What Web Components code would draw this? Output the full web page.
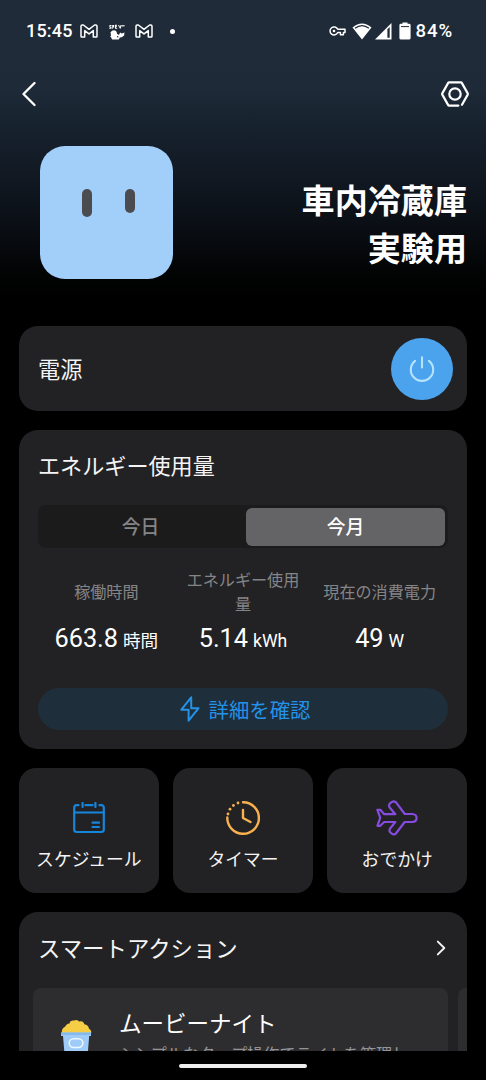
<!DOCTYPE html>
<html lang="ja">
<head>
<meta charset="utf-8">
<title>車内冷蔵庫 実験用</title>
<style>
html,body{margin:0;background:#000}
body{font-family:Roboto,"Noto Sans CJK JP",sans-serif;color:#f4f4f5}
</style>
</head>
<body>
<device-page></device-page>
<script>
const define = (name, css, html) => customElements.define(name, class extends HTMLElement {
  constructor() {
    super();
    const t = document.createElement('template');
    t.innerHTML = `<style>${css}</style>${typeof html === 'function' ? html(this) : html}`;
    this.attachShadow({mode: 'open'}).append(t.content.cloneNode(true));
  }
});

const stroke = (w, d, extra = '') => `<path d="${d}" fill="none" stroke="currentColor" stroke-width="${w}" stroke-linecap="round" stroke-linejoin="round" ${extra}/>`;
const ICONS = {
  mail: [18, 14, stroke(1.5, 'M1 12.2V2.2Q1 1 2.2 1H3.4L9 5.3 14.6 1H15.8Q17 1 17 2.2V12.2Q17 13 16.2 13H13.3V6.6L9 9.9 4.7 6.6V13H1.8Q1 13 1 12.2Z')],
  bird: [16, 16, `<g fill="currentColor"><path d="M.5 1h2v1H1.5v.7h1v2H.3v-1h1v-.5h-1zM3.2 1h2v2.5H4v1.3h-.8zM6 .8h2v.9H7v.6h1v.8H7v.7h1.2v.9H6zM9 1h1l1 2 .6-2h1l-.8 3.6h-1zM12.7 1.2h3v1l-3 .4zM1.5 8.2Q4.2 5.2 7 7.1 8 8 8 9.8L10 11l1.1-2.6 1.7 1.1 2.7-1-.4 3-2.3 1.8-2 .1-1 2-6.8.1-.8-2-1-1 .8-1.1z"/></g><circle cx="8.7" cy="12.7" r=".8" fill="#1e2a37"/>`],
  key: [17, 10, `<path d="M8.7 3.3H16V6.4H14.4V8.7H11.4V6.5H8.7A4 4 0 1 1 8.7 3.3Z" fill="none" stroke="currentColor" stroke-width="1.5" stroke-linejoin="round"/><circle cx="5" cy="5" r="1.3" fill="currentColor"/>`],
  wifi: [20, 17, `<path d="M.5 4.4Q10-3.5 19.5 4.4L10 16.5Z" fill="currentColor"/><path d="M3 5.3Q10-.1 17 5.3" fill="none" stroke="#1e2a37" stroke-width="1.2"/>`],
  signal: [17, 17, `<path d="M0 16.5L16.5 0V16.5Z" fill="currentColor"/><path d="M12.4 6.2L14.7 4V14.8H12.4Z" fill="#1e2a37"/>`],
  battery: [12, 18, `<path d="M3.5 1.8V.4h5v1.4h1.7Q11.6 1.8 11.6 3.2V16Q11.6 17.6 10 17.6H2Q.4 17.6.4 16V3.2Q.4 1.8 1.8 1.8Z" fill="currentColor"/><path d="M2 4.6h8" stroke="#1e2a37"/>`],
  back: [14, 26, stroke(2.3, 'M12.5 2L1.5 13 12.5 24')],
  settings: [28, 26, stroke(2.2, 'M17.4 24.6H8Q7.5 24.6 7.2 24.1L1.3 13.6Q1 13 1.3 12.4L7.2 1.9Q7.5 1.4 8 1.4H20Q20.5 1.4 20.8 1.9L26.7 12.4Q27 13 26.7 13.6L21 23.7') + `<circle cx="14" cy="13" r="5.7" fill="none" stroke="currentColor" stroke-width="2.2"/>`],
  power: [26, 26, stroke(2.1, 'M13 1.2V11.4M6.1 4.9A11.2 11.2 0 1 0 19.9 4.9')],
  bolt: [20, 26, stroke(2, 'M11.2 1.3L1.4 13.7H8.6V24.7L18.6 12.2H11.2Z')],
  calendar: [32, 32, stroke(2.2, 'M5.5 3.2H3.7Q1.2 3.2 1.2 5.7V27.5Q1.2 30 3.7 30H28.3Q30.8 30 30.8 27.5V5.7Q30.8 3.2 28.3 3.2H26.5M12.5 3.2H19.5M9.6 1V4.9M22.4 1V4.9M1.2 10.5H30.8M19.5 20.7H26M19.5 25H26')],
  timer: [34, 34, stroke(2.4, 'M17 1.2A15.8 15.8 0 1 1 1.3 16.5M17 9V17L24.5 21') + `<g fill="currentColor"><circle cx="2" cy="13" r="1.4"/><circle cx="4" cy="8.2" r="1.4"/><circle cx="7.4" cy="4.5" r="1.4"/><circle cx="12" cy="2" r="1.4"/></g>`],
  plane: [42, 36, stroke(2.2, 'M1.4 9.8H4.3L8.2 14.2H19.3L13.5 7.2Q12.2 5.2 14.2 3.2L16 1.9Q18.5.7 20.2 2.6L28.8 14H36Q40.6 14.2 40.6 18 40.6 21.8 36 22H28.7L20.3 33Q18.5 35.6 15.8 33.6L14 32Q12.8 30.5 14.3 28.2L19.3 22H8.2L4.3 25.8H1.4L4.2 17.9Z')],
  next: [10, 16, stroke(1.9, 'M1.8 1.6L8.3 8 1.8 14.4')],
  popcorn: [32, 46, `<path d="M2 15.5Q1 10.5 5.3 8.6 6.2 5.7 9.5 5.4 10.3 2.1 14 2.6 17.2.8 19.2 3.5 23.3 2.4 24.3 6.3 28.5 7.1 29 10.8 32 12.4 31 16Z" fill="#f5ce45"/><path d="M1 14.5H31V18H29.2L27 45H5.3L3 18H1Z" fill="#9ecbf7"/><path d="M1 14.5H31V17H1Z" fill="#85b8eb"/><rect x="9.2" y="20.7" width="13.7" height="8.8" rx="4.4" fill="#9ecbf7" stroke="#edf7ff" stroke-width="1.5"/>`]
};
define('line-icon', ':host{display:block;flex:none}svg{display:block}', el => {
  const [w, h, body] = ICONS[el.getAttribute('name')];
  return `<svg width="${w}" height="${h}" viewBox="0 0 ${w} ${h}">${body}</svg>`;
});

define('status-bar', `
:host{display:flex;height:62px;box-sizing:border-box;padding:0 33px 0 26px;align-items:center;justify-content:space-between;font-size:18px;font-weight:500;color:#fff;line-height:22px}
div{display:flex;align-items:center}
.clock{width:54px;letter-spacing:.2px}.bird{margin:2px 10px 0 11px}.dot{width:5px;height:5px;border-radius:50%;background:#fff;margin-left:17px}
.wifi{margin:0 3px 0 6px}.bat{margin:0 4px 0 7px}.pct{font-size:18.6px;letter-spacing:.9px}`, `
<div><span class="clock">15:45</span><line-icon name="mail"></line-icon><line-icon class="bird" name="bird"></line-icon><line-icon name="mail"></line-icon><span class="dot"></span></div>
<div><line-icon name="key"></line-icon><line-icon class="wifi" name="wifi"></line-icon><line-icon name="signal"></line-icon><line-icon class="bat" name="battery"></line-icon><span class="pct">84%</span></div>`);

define('nav-bar', `:host{display:flex;height:64px;box-sizing:border-box;padding:0 17px 0 22px;justify-content:space-between;align-items:center;color:#fff}`,
`<line-icon name="back"></line-icon><line-icon name="settings"></line-icon>`);

define('plug-picture', `
:host{display:flex;box-sizing:border-box;width:133px;height:133px;border-radius:25px;background:#a2cefa;padding:43px 38px 0 42px;justify-content:space-between;align-items:flex-start}
i{width:10px;border-radius:5px;background:#4b4c50;height:28px}i+i{height:24px}`, `<i></i><i></i>`);

define('device-hero', `
:host{display:flex;height:200px;box-sizing:border-box;padding:20px 19px 0 40px;justify-content:space-between;align-items:flex-start}
h1{margin:29px 0 0;font:700 33.1px/48px "Noto Sans CJK JP",sans-serif;text-align:right;color:#fff}`, `
<plug-picture></plug-picture><h1><slot></slot></h1>`);

define('panel-card', `:host{display:block;box-sizing:border-box;background:#222224;border-radius:19px;overflow:hidden;flex:none}`, `<slot></slot>`);

define('power-row', `
:host{display:flex;height:85px;box-sizing:border-box;padding:0 14px 0 19px;align-items:center;justify-content:space-between;font-size:22.2px}
span{margin-bottom:2px}
button{width:62px;height:62px;border:0;border-radius:50%;background:#4ba3ee;color:#b5e3fb;display:grid;place-items:center;padding:0}`, `
<span><slot></slot></span><button aria-label="電源"><line-icon name="power"></line-icon></button>`);

define('segment-control', `
:host{display:grid;grid-template-columns:1fr 199px;gap:3px;box-sizing:border-box;height:43px;padding:3px 3px 2px 0;border-radius:8px;background:#1b1b1c;font-size:18.8px;font-weight:500;line-height:40px;text-align:center;color:#858586}
.on{background:#646466;color:#fff;border-radius:6px;height:38px}`, `<span>今日</span><span class="on">今月</span>`);

define('usage-stat', `
:host{display:flex;flex-direction:column;align-items:center;min-width:0}
.label{height:48px;width:116px;display:grid;place-items:center;text-align:center;font-size:16.1px;line-height:24px;color:#858587}
.value{font-size:25.3px;line-height:30px;margin-top:7px;margin-bottom:1px;white-space:nowrap;color:#fff;height:30px}
small{font-size:17.6px;margin-left:5px}`, `
<div class="label"><span><slot></slot></span></div><div class="value"><slot name="value"></slot><small><slot name="unit"></slot></small></div>`);

define('detail-button', `
:host{display:flex;height:42px;box-sizing:border-box;padding-left:4px;border-radius:21px;background:#1e2e3b;color:#2492e8;align-items:center;justify-content:center;gap:9px;font-size:20.4px;line-height:28px}
span{margin-top:4px}`,
`<line-icon name="bolt"></line-icon><span><slot></slot></span>`);

define('energy-usage', `
:host{display:block;height:319px;box-sizing:border-box;padding:21px 19px 0}
h2{margin:0 0 24px;font-size:22.1px;font-weight:400;line-height:30px}
.stats{display:grid;grid-template-columns:repeat(3,1fr);margin:21px 0 33px}`, `
<h2>エネルギー使用量</h2><segment-control></segment-control>
<div class="stats">
<usage-stat>稼働時間<span slot="value">663.8</span><span slot="unit">時間</span></usage-stat>
<usage-stat>エネルギー使用量<span slot="value">5.14</span><span slot="unit">kWh</span></usage-stat>
<usage-stat>現在の消費電力<span slot="value">49</span><span slot="unit">W</span></usage-stat>
</div><detail-button>詳細を確認</detail-button>`);

define('quick-tile', `
:host{display:flex;flex-direction:column;align-items:center;height:125px;box-sizing:border-box;padding-top:31px;background:#222224;border-radius:17px;font-size:17.8px;line-height:26px}
div{height:37px;display:grid;place-items:center;margin-bottom:11px}`, el => `
<div style="color:${el.getAttribute('tint')}"><line-icon name="${el.getAttribute('icon')}"></line-icon></div><span><slot></slot></span>`);

define('quick-tiles', `:host{display:grid;grid-template-columns:repeat(3,1fr);gap:14.5px;flex:none}`, `
<quick-tile icon="calendar" tint="#1685dc">スケジュール</quick-tile><quick-tile icon="timer" tint="#f8b14e">タイマー</quick-tile><quick-tile icon="plane" tint="#874be0">おでかけ</quick-tile>`);

define('action-card', `
:host{display:flex;flex:none;box-sizing:border-box;width:415px;height:110px;border-radius:8px;background:#2d2d2f;padding:20px 20px 0 27px;align-items:flex-start}
line-icon{margin:10px 27px 0 0}h3{margin:0;font-size:22.5px;font-weight:400;line-height:32px;color:#fff}
p{margin:3px 0 0;font-size:16.1px;line-height:24px;color:#949496;white-space:nowrap}`, `
<line-icon name="popcorn"></line-icon><div><h3><slot></slot></h3><p><slot name="note"></slot></p></div>`);

define('smart-actions', `
:host{display:block;height:180px}
header{display:flex;height:76px;box-sizing:border-box;padding:0 21px 4px 19px;align-items:center;justify-content:space-between;font-size:22.4px}
header span{margin-bottom:2px}
.rail{display:flex;gap:10px;padding-left:14px;overflow:hidden}
.peek{flex:none;width:415px;height:110px;border-radius:8px;background:#2d2d2f}`, `
<header><span>スマートアクション</span><line-icon name="next"></line-icon></header>
<div class="rail"><action-card>ムービーナイト<span slot="note">シンプルなタップ操作でライトを管理し</span></action-card><div class="peek"></div></div>`);

define('gesture-bar', `:host{display:flex;height:29px;flex:none;justify-content:center;box-sizing:border-box;padding-top:13px;background:#000}i{width:128px;height:4px;border-radius:2px;background:#eeeeef}`, `<i></i>`);

define('device-page', `
:host{display:flex;flex-direction:column;width:486px;height:1080px;overflow:hidden;background:linear-gradient(#1f2b38 0,#1e2a37 90px,#182330 120px,#0c1118 215px,#020303 275px,#000 300px)}
main{flex:1;min-height:0;overflow:hidden;display:flex;flex-direction:column;gap:19px;padding:0 19px}
status-bar,nav-bar,device-hero{flex:none}`, `
<status-bar></status-bar><nav-bar></nav-bar><device-hero>車内冷蔵庫<br>実験用</device-hero>
<main><panel-card><power-row>電源</power-row></panel-card><panel-card><energy-usage></energy-usage></panel-card><quick-tiles></quick-tiles><panel-card><smart-actions></smart-actions></panel-card></main>
<gesture-bar></gesture-bar>`);
</script>
</body>
</html>
